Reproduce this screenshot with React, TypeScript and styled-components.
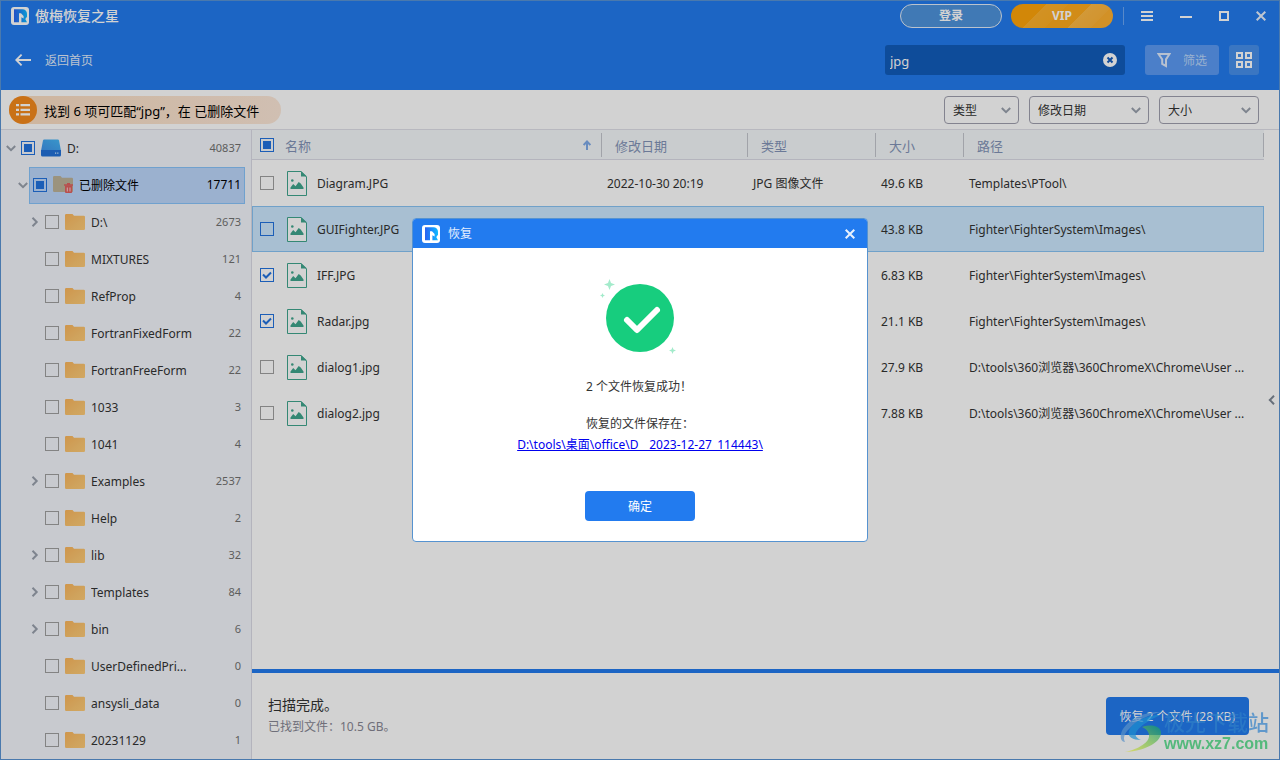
import React from 'react';
import styled, { createGlobalStyle, css } from 'styled-components';

const Global = createGlobalStyle`
  *, *::before, *::after { box-sizing: border-box; }
  body { margin: 0; }
  body, button, input, select, table {
    font-family: "Noto Sans", "Noto Sans CJK SC", sans-serif;
    font-size: 12px;
    line-height: 18px;
  }
  button { border: 0; padding: 0; background: none; color: inherit; cursor: pointer; }
  svg { display: block; flex: none; }
`;

/* ---------- icons ---------- */

const LogoIcon = () => (
  <svg width="18" height="18" viewBox="0 0 18 18" aria-hidden="true">
    <defs>
      <linearGradient id="logoBlue" x1="0" x2="1" y1="0" y2="0">
        <stop offset="0" stopColor="#2a62f0" />
        <stop offset=".5" stopColor="#1c8bfb" />
        <stop offset="1" stopColor="#0fbcff" />
      </linearGradient>
    </defs>
    <rect width="18" height="18" rx="3" fill="#fff" />
    <path d="M3 2.200h8.500A4.500 4.500 0 0 1 16 6.700v3.100L14.300 12l1.700 3.200H3z" fill="url(#logoBlue)" />
    <path d="M8 6.200h2L12.600 9v2.400l-2.200-1.200v5.800H8z" fill="#fff" />
  </svg>
);

const MenuIcon = () => (
  <svg width="12" height="12" viewBox="0 0 12 12" fill="#fff" aria-hidden="true">
    <path d="M0 1h12v2H0zM0 5h12v2H0zM0 9h12v2H0z" />
  </svg>
);
const MinIcon = () => (
  <svg width="12" height="12" viewBox="0 0 12 12" fill="#fff" aria-hidden="true"><path d="M0 6h12v2H0z" /></svg>
);
const MaxIcon = () => (
  <svg width="10" height="10" viewBox="0 0 10 10" fill="none" stroke="#fff" strokeWidth="2" aria-hidden="true">
    <path d="M1 1h8v8H1z" />
  </svg>
);
const CloseIcon = () => (
  <svg width="10" height="10" viewBox="0 0 10 10" stroke="#e8f1fe" strokeWidth="2" aria-hidden="true">
    <path d="M.7.7l8.600 8.600M9.300.7L.7 9.300" />
  </svg>
);
const BackIcon = () => (
  <svg width="16" height="12" viewBox="0 0 16 12" fill="none" stroke="#fff" strokeWidth="1.800" aria-hidden="true">
    <path d="M16 6H1.500M6.600.6L1.200 6l5.400 5.400" />
  </svg>
);
const ClearIcon = () => (
  <svg width="14" height="14" viewBox="0 0 14 14" aria-hidden="true">
    <circle cx="7" cy="7" r="7" fill="#fff" />
    <path d="M4.500 4.500l5 5M9.500 4.500l-5 5" stroke="#135bbb" strokeWidth="2" />
  </svg>
);
const FunnelIcon = () => (
  <svg width="14" height="15" viewBox="0 0 14 15" fill="none" stroke="#dfebfd" strokeWidth="2" aria-hidden="true">
    <path d="M1.500 1h11L9 6.400V13L5.200 11V6.400z" />
  </svg>
);
const GridIcon = () => (
  <svg width="16" height="16" viewBox="0 0 16 16" fill="none" stroke="#fff" strokeWidth="2" aria-hidden="true">
    <path d="M1 1h5v5H1zM10 1h5v5h-5zM1 10h5v5H1zM10 10h5v5h-5z" />
  </svg>
);
const ListIcon = () => (
  <svg width="14" height="12" viewBox="0 0 14 12" fill="#fff" aria-hidden="true">
    <path d="M0 0h3v2.300H0zM4.500 0H14v2.300H4.500zM0 4.700h3V7H0zM4.500 4.700H14V7H4.500zM0 9.300h3v2.300H0zM4.500 9.300H14v2.300H4.500z" />
  </svg>
);
const Chevron = ({ dir, color = '#9aa1ad' }: { dir: 'down' | 'right' | 'left'; color?: string }) => (
  <svg width="10" height="10" viewBox="0 0 10 10" fill="none" stroke={color} strokeWidth="2" aria-hidden="true">
    <path d={dir === 'down' ? 'M.8 3L5 7.200 9.200 3' : dir === 'right' ? 'M2.500.8L6.700 5 2.500 9.200' : 'M7 .8L2.800 5 7 9.200'} />
  </svg>
);
const DiskIcon = () => (
  <svg width="20" height="18" viewBox="0 0 20 18" aria-hidden="true">
    <defs>
      <linearGradient id="diskTop" x1="0" x2="1" y1="1" y2="0">
        <stop offset="0" stopColor="#3f92ea" />
        <stop offset="1" stopColor="#45b8f6" />
      </linearGradient>
    </defs>
    <path d="M3.200.5h13.600q1 0 1.200 1L20 12H0L2 1.500q.2-1 1.200-1z" fill="url(#diskTop)" />
    <path d="M0 11h20v5a1.500 1.500 0 0 1-1.500 1.500h-17A1.500 1.500 0 0 1 0 16z" fill="#2272d8" />
    <path d="M14 13.500h1.200v1.200H14zM16.200 13.500h1.200v1.200h-1.200z" fill="#cfe8ff" />
  </svg>
);
const FolderIcon = () => (
  <svg width="20" height="16" viewBox="0 0 20 16" aria-hidden="true">
    <defs>
      <linearGradient id="folder" x1="0" x2="1" y1="0" y2="1">
        <stop offset="0" stopColor="#fcb65c" />
        <stop offset=".6" stopColor="#fcc570" />
        <stop offset="1" stopColor="#ffcc78" />
      </linearGradient>
    </defs>
    <path d="M0 1.200A1.200 1.200 0 0 1 1.200 0h6.300L9 1.800h9.800A1.200 1.200 0 0 1 20 3v11.800a1.200 1.200 0 0 1-1.200 1.200H1.200A1.200 1.200 0 0 1 0 14.800z" fill="url(#folder)" />
  </svg>
);
const DeletedFolderIcon = () => (
  <svg width="20" height="17" viewBox="0 0 20 17" aria-hidden="true">
    <path d="M0 1.200A1.200 1.200 0 0 1 1.200 0h6.300L9 1.800h9.800A1.200 1.200 0 0 1 20 3v12a1 1 0 0 1-1.200 1H1.200A1.200 1.200 0 0 1 0 14.800z" fill="#bdb39a" />
    <path d="M11 9h9M14 7.600h3" stroke="#e0605f" strokeWidth="1.400" />
    <path d="M12 9.500h7.200V16a1 1 0 0 1-1 1H13a1 1 0 0 1-1-1z" fill="#e0605f" />
    <path d="M14.300 11.500v4M17 11.500v4" stroke="#f5d0d0" />
  </svg>
);
const ImageFileIcon = () => (
  <svg width="20" height="25" viewBox="0 0 20 25" aria-hidden="true">
    <path d="M.5.500H14L19.500 6v18.500H.5z" fill="#fff" stroke="#40a68d" />
    <path d="M14 0v5.500h6z" fill="#40a68d" />
    <path d="M3.500 18v-1.500L6.200 13l2.300 2.300 3.200-4.300 2 1.500 2.800 4V18z" fill="#40a68d" />
    <circle cx="5.300" cy="9.500" r="1.300" fill="#40a68d" />
  </svg>
);
const SortIcon = () => (
  <svg width="8" height="10" viewBox="0 0 8 10" fill="none" stroke="#7fabe8" strokeWidth="2" aria-hidden="true">
    <path d="M4 10V1.500M.6 5L4 1.500 7.400 5" />
  </svg>
);
const SuccessIcon = () => (
  <svg width="78" height="76" viewBox="1 0 78 76" overflow="visible" aria-hidden="true">
    <circle cx="40" cy="39" r="34" fill="#17cd7e" />
    <path d="M27 41l10 10L57 31" fill="none" stroke="#fff" strokeWidth="6" strokeLinecap="round" strokeLinejoin="round" />
    <g fill="#a3ebcb">
      <path d="M9.500 0L11 4l4 1.500-4 1.500-1.500 4L8 7 4 5.500 8 4z" />
      <path d="M2.500 14l.8 1.700 1.700.8-1.700.8-.8 1.700-.8-1.700L0 16.500l1.700-.8z" />
      <path d="M72.500 68l1 2.500 2.500 1-2.500 1-1 2.500-1-2.500-2.500-1 2.500-1z" />
    </g>
  </svg>
);
const WatermarkLogo = () => (
  <svg width="42" height="42" viewBox="0 0 42 42" aria-hidden="true">
    <defs>
      <linearGradient id="swirl" x1="0" x2="1" y1="1" y2="0">
        <stop offset="0" stopColor="#e0dc3c" />
        <stop offset=".5" stopColor="#7cc04a" />
        <stop offset="1" stopColor="#109a72" />
      </linearGradient>
    </defs>
    <path d="M41 1C24 0 4 10 1 23c-1 5 1 8 4 8-2-4-1-8 4-13C17 10 29 3 41 1z" fill="#5b92c8" />
    <path d="M40 4C26 4 12 11 9 20c-2 6 4 9 12 9-5-2-7-5-4-9 4-6 13-11 23-16z" fill="#1f8fd0" />
    <path d="M22 16c10-3 18-1 19 5 1 9-14 19-36 20 14-3 25-10 24-17-.5-4-3-6-7-8z" fill="url(#swirl)" />
  </svg>
);

/* ---------- shared parts ---------- */

const Check = styled.input.attrs({ type: 'checkbox' })<{ $mixed?: boolean; $active?: boolean }>`
  appearance: none;
  flex: none;
  width: 14px;
  height: 14px;
  margin: 0;
  display: block;
  border: 1px solid ${p => (p.$active || p.$mixed ? '#2273df' : '#a0a0a0')};
  background: transparent;
  &:checked {
    border-color: #2273df;
    background: url("data:image/svg+xml,%3Csvg xmlns='http://www.w3.org/2000/svg' viewBox='0 0 12 12' fill='none' stroke='%232273df' stroke-width='2'%3E%3Cpath d='M2 5.500l3 3 5-5'/%3E%3C/svg%3E") center / 12px 12px no-repeat;
  }
  ${p => p.$mixed && css`
    background: linear-gradient(#2273df, #2273df) center / 8px 8px no-repeat;
  `}
`;

/* ---------- window ---------- */

const Window = styled.div`
  height: 100vh;
  min-height: 600px;
  display: flex;
  flex-direction: column;
  border: 1px solid #5a93d2;
  background: #fff;
  color: #333;
  overflow: hidden;
`;

const Header = styled.header`
  background: #227bef;
  color: #fff;
  height: 89px;
  flex: none;
`;
const TitleBar = styled.div`
  display: flex;
  align-items: center;
  height: 30px;
  padding: 0 13px 0 10px;
`;
const AppName = styled.h1`
  margin: 0 auto 0 6px;
  font-size: 14px;
  line-height: 20px;
  font-weight: 500;
`;
const Pill = styled.button<{ $vip?: boolean }>`
  width: 102px;
  height: 24px;
  margin-right: 9px;
  border-radius: 12px;
  font-weight: 700;
  color: #fff;
  border: ${p => (p.$vip ? '0' : '1px solid #e3edf9')};
  background: ${p => p.$vip
    ? 'linear-gradient(135deg, #ffa50a 0 28%, #ffb22c 28%, #ffae24 46%, #ffab1c 46% 64%, #ffba44 64%, #ffb43a 82%, #ffb030 82%)'
    : '#4e93dc'};
`;
const Divider = styled.span`
  width: 1px;
  height: 18px;
  margin: 0 17px 0 1px;
  background: #6ba7f5;
`;
const WindowButtons = styled.div`
  display: flex;
  align-items: center;
  gap: 27px;
`;
const NavBar = styled.div`
  display: flex;
  align-items: center;
  height: 58px;
  padding: 0 20px 0 14px;
`;
const BackLink = styled.button`
  display: flex;
  align-items: center;
  gap: 14px;
  margin-right: auto;
  color: #e3edfc;
  span { padding-top: 2px; }
`;
const SearchBox = styled.div`
  display: flex;
  align-items: center;
  width: 240px;
  height: 30px;
  padding: 0 8px 0 5px;
  margin-right: 20px;
  border-radius: 3px;
  background: #125dbb;
  input {
    flex: 1;
    min-width: 0;
    padding: 2px 0 0;
    border: 0;
    outline: 0;
    background: transparent;
    color: #fff;
    font-size: 13px;
  }
`;
const FilterButton = styled.button`
  display: flex;
  align-items: center;
  justify-content: center;
  gap: 12px;
  width: 74px;
  height: 30px;
  margin-right: 10px;
  border-radius: 3px;
  background: #5b9bf5;
  color: #bcd7fb;
  span { padding-top: 2px; }
`;
const ViewButton = styled.button`
  display: grid;
  place-items: center;
  width: 30px;
  height: 30px;
  border-radius: 3px;
  background: #4790ec;
`;

/* ---------- results bar ---------- */

const ResultsBar = styled.div`
  display: flex;
  align-items: center;
  gap: 10px;
  height: 40px;
  flex: none;
  padding: 0 20px 0 8px;
  border-bottom: 1px solid #e0e0e8;
`;
const Summary = styled.div`
  display: flex;
  align-items: center;
  gap: 7px;
  height: 28px;
  margin-right: auto;
  padding-right: 22px;
  border-radius: 14px;
  background: linear-gradient(90deg, #fadcc0, #fde8d8);
  color: #000;
  font-size: 13px;
  > :last-child { padding-top: 2px; }
`;
const SummaryIcon = styled.span`
  display: grid;
  place-items: center;
  width: 28px;
  height: 28px;
  border-radius: 50%;
  background: #f58a1c;
`;
const SelectWrap = styled.div<{ $w: number }>`
  display: grid;
  align-items: center;
  width: ${p => p.$w}px;
  > * { grid-area: 1 / 1; }
  > svg { justify-self: end; margin-right: 8px; pointer-events: none; }
  select {
    appearance: none;
    width: 100%;
    height: 28px;
    padding: 2px 8px 0;
    border: 1px solid #a0a0ae;
    border-radius: 4px;
    background: #fff;
    color: #333;
  }
`;

/* ---------- body ---------- */

const Body = styled.div`
  flex: 1;
  min-height: 0;
  display: flex;
`;
const Sidebar = styled.nav`
  flex: none;
  width: 251px;
  padding-right: 6px;
  background: #f3f6fc;
  border-right: 1px solid #dbdbe6;
  overflow: hidden;
`;
const TreeRow = styled.div<{ $level: number }>`
  display: flex;
  align-items: center;
  height: 37px;
  padding-left: ${p => 5 + p.$level * 12}px;
`;
const Toggle = styled.span`
  width: 11px;
  flex: none;
  padding-bottom: 2px;
`;
const TreeLabel = styled.label<{ $selected?: boolean }>`
  flex: 1;
  min-width: 0;
  display: flex;
  align-items: center;
  height: 37px;
  padding: 0 3px 2px;
  border: 1px solid ${p => (p.$selected ? '#88c4fb' : 'transparent')};
  background: ${p => (p.$selected ? '#bdd7fc' : 'transparent')};
  color: ${p => (p.$selected ? '#000' : '#333')};
  > svg { margin: 0 6px; }
`;
const TreeName = styled.span`
  flex: 1;
  padding-top: 2px;
  overflow: hidden;
  white-space: nowrap;
  text-overflow: ellipsis;
`;
const TreeCount = styled.span<{ $selected?: boolean }>`
  flex: none;
  font-size: ${p => (p.$selected ? 12 : 11)}px;
  color: ${p => (p.$selected ? '#000' : '#727272')};
`;

const Main = styled.main`
  flex: 1;
  min-width: 0;
  display: flex;
  flex-direction: column;
`;
const ListArea = styled.div`
  flex: 1;
  min-height: 0;
  display: flex;
  overflow: hidden;
`;
const TableBox = styled.div`
  flex: 1;
  min-width: 0;
`;
const FileTable = styled.table`
  width: 100%;
  table-layout: fixed;
  border-collapse: separate;
  border-spacing: 0;
`;
const HeadCell = styled.th`
  height: 30px;
  padding: 0;
  background: #f5f8fa;
  border-bottom: 1px solid #dbdbe6;
  font-size: 13px;
  font-weight: 400;
  text-align: left;
  color: #8394b8;
`;
const HeadInner = styled.div<{ $first?: boolean }>`
  display: flex;
  align-items: center;
  justify-content: space-between;
  height: 24px;
  padding: ${p => (p.$first ? '0 10px 0 8px' : '2px 13px 0')};
  border-right: 1px solid #c4c6ce;
`;
const NameGroup = styled.label`
  display: flex;
  align-items: center;
  min-width: 0;
`;
const HeadName = styled.span`
  margin-left: 11px;
  padding-top: 2px;
`;
const FileRow = styled.tr<{ $selected?: boolean }>`
  td {
    height: 46px;
    padding: 2px 5px 0;
    white-space: nowrap;
    overflow: hidden;
    text-overflow: ellipsis;
    color: #333;
    border: 0 solid #88c4f5;
  }
  td:first-child { padding: 0 5px 0 8px; }
  ${p => p.$selected && css`
    td { background: #cce8ff; border-width: 1px 0; }
    td:first-child { border-left-width: 1px; padding-left: 7px; }
    td:last-child { border-right-width: 1px; }
  `}
`;
const FileName = styled.span`
  margin-left: 10px;
  padding-top: 2px;
`;
const FileGlyph = styled.span`
  margin-left: 13px;
`;
const Collapse = styled.button`
  width: 15px;
  display: grid;
  place-items: center;
`;

const Footer = styled.footer`
  flex: none;
  height: 90px;
  display: flex;
  align-items: center;
  justify-content: space-between;
  padding: 0 30px 0 16px;
  border-top: 4px solid #227bef;
`;
const Status = styled.div`
  display: grid;
  gap: 4px;
  color: #878794;
  strong { font-size: 14px; font-weight: 400; color: #333; }
`;
const RecoverButton = styled.button`
  height: 38px;
  padding: 2px 14px 0 13px;
  border-radius: 4px;
  background: #227bef;
  color: #fff;
`;

/* ---------- dialog ---------- */

const Overlay = styled.div`
  position: fixed;
  inset: 0;
  display: grid;
  place-items: center;
  background: rgba(0, 0, 0, 0.176);
`;
const Dialog = styled.section`
  width: 456px;
  border: 1px solid #5693d0;
  border-radius: 4px;
  overflow: hidden;
  background: #fff;
  color: #333;
`;
const DialogBar = styled.header`
  display: flex;
  align-items: center;
  justify-content: space-between;
  height: 29px;
  padding: 0 12px 0 9px;
  background: #227bef;
`;
const DialogTitle = styled.h2`
  display: flex;
  align-items: center;
  gap: 8px;
  margin: 0;
  font-size: 12px;
  font-weight: 400;
  color: #e2eefe;
`;
const DialogBody = styled.div`
  display: flex;
  flex-direction: column;
  align-items: center;
  padding: 31px 20px 20px;
  p { margin: 0; }
`;
const Message = styled.div`
  display: grid;
  gap: 19px;
  margin: 23px 0 3px;
`;
const SavePath = styled.a`
  color: #0000ee;
  margin-bottom: 37px;
`;
const OkButton = styled.button`
  width: 110px;
  height: 30px;
  padding-top: 2px;
  border-radius: 4px;
  background: #227bef;
  color: #fff;
`;

const Watermark = styled.div`
  position: fixed;
  right: 11px;
  bottom: 6px;
  display: flex;
  align-items: center;
  gap: 2px;
  opacity: 0.7;
  pointer-events: none;
`;
const WatermarkText = styled.div`
  display: grid;
  font-size: 21px;
  line-height: 24px;
  color: #2f7fc8;
  font-weight: 500;
  small {
    font-family: "Liberation Sans", sans-serif;
    font-size: 16px;
    line-height: 20px;
    font-weight: 700;
    color: #1fae57;
  }
`;

/* ---------- data ---------- */

type Node = { name: string; count: number; level: number; open?: boolean; kids?: boolean };

const tree: Node[] = [
  { name: 'D:', count: 40837, level: 0, open: true, kids: true },
  { name: '已删除文件', count: 17711, level: 1, open: true, kids: true },
  { name: 'D:\\', count: 2673, level: 2, kids: true },
  { name: 'MIXTURES', count: 121, level: 2 },
  { name: 'RefProp', count: 4, level: 2 },
  { name: 'FortranFixedForm', count: 22, level: 2 },
  { name: 'FortranFreeForm', count: 22, level: 2 },
  { name: '1033', count: 3, level: 2 },
  { name: '1041', count: 4, level: 2 },
  { name: 'Examples', count: 2537, level: 2, kids: true },
  { name: 'Help', count: 2, level: 2 },
  { name: 'lib', count: 32, level: 2, kids: true },
  { name: 'Templates', count: 84, level: 2, kids: true },
  { name: 'bin', count: 6, level: 2, kids: true },
  { name: 'UserDefinedPri...', count: 0, level: 2 },
  { name: 'ansysli_data', count: 0, level: 2 },
  { name: '20231129', count: 1, level: 2 },
];

const files = [
  { name: 'Diagram.JPG', date: '2022-10-30 20:19', type: 'JPG 图像文件', size: '49.6 KB', path: 'Templates\\PTool\\' },
  { name: 'GUIFighter.JPG', date: '', type: '', size: '43.8 KB', path: 'Fighter\\FighterSystem\\Images\\', selected: true },
  { name: 'IFF.JPG', date: '', type: '', size: '6.83 KB', path: 'Fighter\\FighterSystem\\Images\\', checked: true },
  { name: 'Radar.jpg', date: '', type: '', size: '21.1 KB', path: 'Fighter\\FighterSystem\\Images\\', checked: true },
  { name: 'dialog1.jpg', date: '', type: '', size: '27.9 KB', path: 'D:\\tools\\360浏览器\\360ChromeX\\Chrome\\User ...' },
  { name: 'dialog2.jpg', date: '', type: '', size: '7.88 KB', path: 'D:\\tools\\360浏览器\\360ChromeX\\Chrome\\User ...' },
];

const filters = [
  { label: '类型', width: 75 },
  { label: '修改日期', width: 120 },
  { label: '大小', width: 100 },
];

export default function App() {
  return (
    <>
      <Global />
      <Window>
        <Header>
          <TitleBar>
            <LogoIcon />
            <AppName>傲梅恢复之星</AppName>
            <Pill>登录</Pill>
            <Pill $vip>VIP</Pill>
            <Divider />
            <WindowButtons>
              <button aria-label="菜单"><MenuIcon /></button>
              <button aria-label="最小化"><MinIcon /></button>
              <button aria-label="最大化"><MaxIcon /></button>
              <button aria-label="关闭"><CloseIcon /></button>
            </WindowButtons>
          </TitleBar>
          <NavBar>
            <BackLink><BackIcon /><span>返回首页</span></BackLink>
            <SearchBox>
              <input aria-label="搜索" defaultValue="jpg" />
              <button aria-label="清除"><ClearIcon /></button>
            </SearchBox>
            <FilterButton><FunnelIcon /><span>筛选</span></FilterButton>
            <ViewButton aria-label="视图"><GridIcon /></ViewButton>
          </NavBar>
        </Header>

        <ResultsBar>
          <Summary>
            <SummaryIcon><ListIcon /></SummaryIcon>
            <span>找到 6 项可匹配“jpg”，在 已删除文件</span>
          </Summary>
          {filters.map(f => (
            <SelectWrap key={f.label} $w={f.width}>
              <select aria-label={f.label}><option>{f.label}</option></select>
              <Chevron dir="down" />
            </SelectWrap>
          ))}
        </ResultsBar>

        <Body>
          <Sidebar>
            {tree.map((n, i) => (
              <TreeRow key={n.name} $level={n.level}>
                <Toggle>{n.kids && <Chevron dir={n.open ? 'down' : 'right'} />}</Toggle>
                <TreeLabel $selected={i === 1}>
                  <Check $mixed={i < 2} />
                  {i === 0 ? <DiskIcon /> : i === 1 ? <DeletedFolderIcon /> : <FolderIcon />}
                  <TreeName>{n.name}</TreeName>
                  <TreeCount $selected={i === 1}>{n.count}</TreeCount>
                </TreeLabel>
              </TreeRow>
            ))}
          </Sidebar>

          <Main>
            <ListArea>
              <TableBox>
                <FileTable>
                  <colgroup>
                    <col style={{ width: 350 }} />
                    <col style={{ width: 146 }} />
                    <col style={{ width: 128 }} />
                    <col style={{ width: 88 }} />
                    <col />
                  </colgroup>
                  <thead>
                    <tr>
                      <HeadCell>
                        <HeadInner $first>
                          <NameGroup><Check $mixed /><HeadName>名称</HeadName></NameGroup>
                          <SortIcon />
                        </HeadInner>
                      </HeadCell>
                      {['修改日期', '类型', '大小', '路径'].map(h => (
                        <HeadCell key={h}><HeadInner>{h}</HeadInner></HeadCell>
                      ))}
                    </tr>
                  </thead>
                  <tbody>
                    {files.map(f => (
                      <FileRow key={f.name} $selected={f.selected}>
                        <td>
                          <NameGroup>
                            <Check $active={f.selected} defaultChecked={f.checked} />
                            <FileGlyph><ImageFileIcon /></FileGlyph>
                            <FileName>{f.name}</FileName>
                          </NameGroup>
                        </td>
                        <td>{f.date}</td>
                        <td>{f.type}</td>
                        <td>{f.size}</td>
                        <td>{f.path}</td>
                      </FileRow>
                    ))}
                  </tbody>
                </FileTable>
              </TableBox>
              <Collapse aria-label="展开预览"><Chevron dir="left" color="#7d8794" /></Collapse>
            </ListArea>
            <Footer>
              <Status>
                <strong>扫描完成。</strong>
                <span>已找到文件：10.5 GB。</span>
              </Status>
              <RecoverButton>恢复 2 个文件 (28 KB)</RecoverButton>
            </Footer>
          </Main>
        </Body>
      </Window>

      <Overlay>
        <Dialog role="dialog" aria-label="恢复">
          <DialogBar>
            <DialogTitle><LogoIcon />恢复</DialogTitle>
            <button aria-label="关闭"><CloseIcon /></button>
          </DialogBar>
          <DialogBody>
            <SuccessIcon />
            <Message>
              <p>2 个文件恢复成功！</p>
              <p>恢复的文件保存在：</p>
            </Message>
            <SavePath href="#">D:\tools\桌面\office\D__2023-12-27_114443\</SavePath>
            <OkButton>确定</OkButton>
          </DialogBody>
        </Dialog>
      </Overlay>

      <Watermark>
        <WatermarkLogo />
        <WatermarkText>极光下载站<small>www.xz7.com</small></WatermarkText>
      </Watermark>
    </>
  );
}
